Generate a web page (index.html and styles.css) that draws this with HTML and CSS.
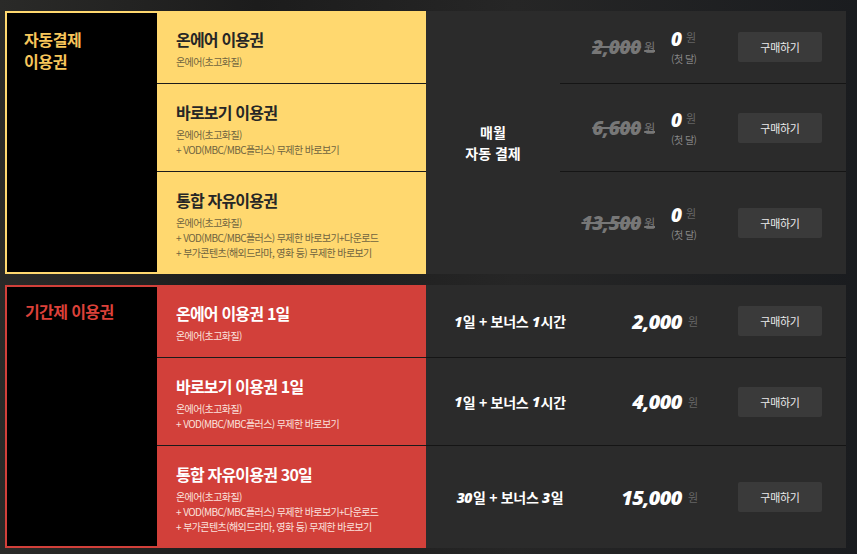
FILE: index.html
```html
<!DOCTYPE html>
<html lang="ko">
<head>
<meta charset="utf-8">
<title>이용권 구매</title>
<link rel="stylesheet" href="styles.css">
</head>
<body>
<div class="page">
  <section class="plan plan-auto">
    <div class="label"><h2><span class="label-line">자동결제</span><span class="label-line">이용권</span></h2></div>

    <div class="name row1">
      <h3>온에어 이용권</h3>
      <p>온에어(초고화질)</p>
    </div>
    <div class="name row2">
      <h3>바로보기 이용권</h3>
      <p>온에어(초고화질)<br>+ VOD(MBC/MBC플러스) 무제한 바로보기</p>
    </div>
    <div class="name row3 last">
      <h3>통합 자유이용권</h3>
      <p>온에어(초고화질)<br>+ VOD(MBC/MBC플러스) 무제한 바로보기+다운로드<br>+ 부가콘텐츠(해외드라마, 영화 등) 무제한 바로보기</p>
    </div>

    <div class="mid mid-all">매월<br>자동 결제</div>

    <div class="price row1">
      <span class="old">2,000<small>원</small></span>
      <span class="now"><span class="now-line"><b>0</b><small>원</small></span><span class="first">(첫 달)</span></span>
      <button class="buy">구매하기</button>
    </div>
    <div class="price row2">
      <span class="old">6,600<small>원</small></span>
      <span class="now"><span class="now-line"><b>0</b><small>원</small></span><span class="first">(첫 달)</span></span>
      <button class="buy">구매하기</button>
    </div>
    <div class="price row3 last">
      <span class="old">13,500<small>원</small></span>
      <span class="now"><span class="now-line"><b>0</b><small>원</small></span><span class="first">(첫 달)</span></span>
      <button class="buy">구매하기</button>
    </div>
  </section>

  <section class="plan plan-term">
    <div class="label"><h2>기간제 이용권</h2></div>

    <div class="name row1">
      <h3>온에어 이용권 1일</h3>
      <p>온에어(초고화질)</p>
    </div>
    <div class="name row2">
      <h3>바로보기 이용권 1일</h3>
      <p>온에어(초고화질)<br>+ VOD(MBC/MBC플러스) 무제한 바로보기</p>
    </div>
    <div class="name row3 last">
      <h3>통합 자유이용권 30일</h3>
      <p>온에어(초고화질)<br>+ VOD(MBC/MBC플러스) 무제한 바로보기+다운로드<br>+ 부가콘텐츠(해외드라마, 영화 등) 무제한 바로보기</p>
    </div>

    <div class="mid row1"><span class="num">1</span>일 + 보너스 <span class="num">1</span>시간</div>
    <div class="mid row2"><span class="num">1</span>일 + 보너스 <span class="num">1</span>시간</div>
    <div class="mid row3 last"><span class="num">30</span>일 + 보너스 <span class="num">3</span>일</div>

    <div class="price row1">
      <span class="amount">2,000</span><small class="won">원</small>
      <button class="buy">구매하기</button>
    </div>
    <div class="price row2">
      <span class="amount">4,000</span><small class="won">원</small>
      <button class="buy">구매하기</button>
    </div>
    <div class="price row3 last">
      <span class="amount">15,000</span><small class="won">원</small>
      <button class="buy">구매하기</button>
    </div>
  </section>
</div>
</body>
</html>
```

FILE: styles.css
```css
* { box-sizing: border-box; }

html, body {
  margin: 0;
  height: 100%;
}

body {
  background: #202020;
  background-image:
    linear-gradient(90deg, #2a2a28 0%, #1c1c1c 30%, #262626 60%, #1a1c1f 100%);
  font-family: "Noto Sans CJK KR", "Noto Sans", sans-serif;
  overflow: hidden;
}

.page {
  display: flex;
  flex-direction: column;
  gap: 11px;
  padding: 11px 0 0 5px;
}

.plan {
  display: grid;
  grid-template-columns: 152px 269px 134px 286px;
  width: 841px;
}

.plan-term {
  grid-template-columns: 152px 269px 168px 252px;
}

.row1 { grid-row: 1; }
.row2 { grid-row: 2; }
.row3 { grid-row: 3; }

/* label column */
.label {
  grid-column: 1;
  grid-row: 1 / 4;
  background: #000;
  border: 2px solid #ffd86f;
  border-right: 0;
  padding: 17px 10px 0 17px;
}

.label h2 {
  margin: 0;
  font-size: 16px;
  line-height: 18px;
  font-weight: 700;
  color: #f7c65b;
  letter-spacing: -0.4px;
  display: flex;
  flex-direction: column;
  gap: 4px;
}

.label-line { display: block; }

.plan-term .label {
  border-color: #d2403a;
  padding: 13px 10px 0 18px;
}

.plan-term .label h2 {
  font-size: 16px;
  line-height: 22px;
  color: #dc4139;
  letter-spacing: -0.6px;
}

/* names column */
.name {
  grid-column: 2;
  background: #ffd86f;
  padding: 17px 10px 14px 19px;
  border-bottom: 1px solid #1b1b1b;
}

.name.last { border-bottom: 0; }

.name h3 {
  margin: 0;
  font-size: 16px;
  line-height: 22px;
  font-weight: 700;
  color: #262626;
  letter-spacing: -0.8px;
}

.name p {
  margin: 4px 0 0;
  font-size: 10px;
  line-height: 15px;
  color: #6f6440;
  letter-spacing: -0.6px;
}

.plan-term .name {
  background: #d2403a;
}

.plan-term .name h3 { color: #fff; }
.plan-term .name p { color: #fbe2de; }

/* middle column */
.mid {
  grid-column: 3;
  background: #2b2b2b;
  color: #fff;
  font-weight: 700;
  display: flex;
  align-items: center;
  justify-content: center;
  text-align: center;
  border-bottom: 1px solid #151515;
}

.mid-all {
  grid-row: 1 / 4;
  font-size: 14px;
  line-height: 21px;
  border-bottom: 0;
}

.plan-term .mid {
  font-size: 14px;
  letter-spacing: -0.3px;
  white-space: pre;
}

.mid.last { border-bottom: 0; }

.num {
  font-family: "Open Sans", "Noto Sans", sans-serif;
  font-style: italic;
  font-weight: 800;
  letter-spacing: -0.5px;
  margin-right: 1px;
}

/* price column */
.price {
  grid-column: 4;
  background: #2b2b2b;
  display: flex;
  align-items: center;
  justify-content: flex-end;
  padding-right: 24px;
  border-bottom: 1px solid #151515;
}

.price.last { border-bottom: 0; }

.old {
  font-family: "Open Sans", "Noto Sans", sans-serif;
  font-style: italic;
  font-weight: 800;
  font-size: 19px;
  line-height: 24px;
  color: #777;
  text-decoration: line-through;
  text-decoration-thickness: 2px;
  letter-spacing: -0.2px;
  margin-right: 16px;
}

.old small {
  font-family: "Noto Sans CJK KR", sans-serif;
  font-style: normal;
  font-weight: 400;
  font-size: 12px;
  color: #777;
  margin-left: 3px;
  vertical-align: 2px;
}

.now {
  width: 26px;
  display: flex;
  flex-direction: column;
  align-items: flex-start;
  margin-top: 2px;
}

.now-line {
  display: flex;
  align-items: flex-start;
  height: 18px;
  line-height: 18px;
}

.now-line b {
  font-family: "Open Sans", "Noto Sans", sans-serif;
  font-style: italic;
  font-weight: 800;
  font-size: 19px;
  color: #fff;
}

.now-line small {
  font-size: 11px;
  line-height: 14px;
  color: #666;
  margin-left: 4px;
}

.first {
  font-size: 10px;
  line-height: 14px;
  color: #888;
  letter-spacing: -0.5px;
  white-space: nowrap;
  margin-top: 4px;
}

.amount {
  font-family: "Open Sans", "Noto Sans", sans-serif;
  font-style: italic;
  font-weight: 800;
  font-size: 20px;
  color: #fff;
  letter-spacing: -0.6px;
}

.won {
  font-size: 11px;
  color: #666;
  margin-left: 6px;
}

.buy {
  width: 84px;
  height: 30px;
  margin-left: 41px;
  background: #3a3a3a;
  border: 0;
  border-radius: 2px;
  color: #eaeaea;
  font-family: "Noto Sans CJK KR", sans-serif;
  font-size: 11px;
  letter-spacing: -0.3px;
  padding: 0;
}

.plan-term .buy { margin-left: 40px; }
```
